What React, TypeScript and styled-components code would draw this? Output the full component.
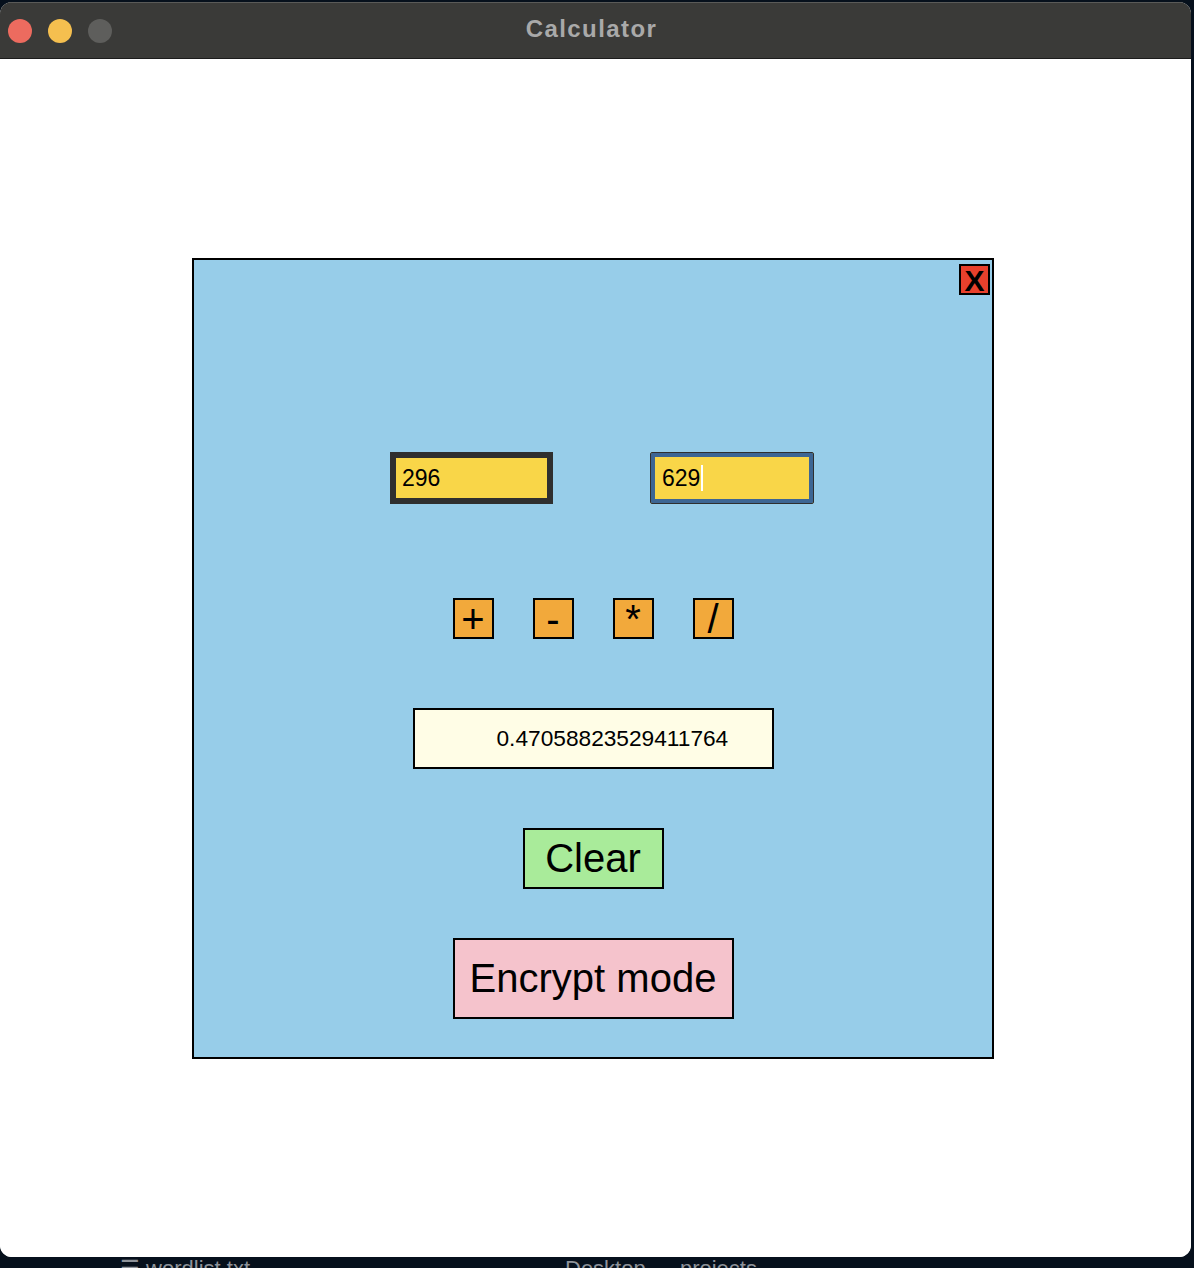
import React from "react";
import styled, { createGlobalStyle } from "styled-components";

const OPERATORS = ["+", "-", "*", "/"];

const GlobalStyle = createGlobalStyle`
  html, body {
    margin: 0;
    padding: 0;
    background: #06101c;
    font-family: "Liberation Sans", Arial, sans-serif;
  }
`;

export default function App() {
  return (
    <>
      <GlobalStyle />
      <Desktop>
        <Window>
          <TitleBar>
            <Lights>
              <Light $color="#ec6b5f" />
              <Light $color="#f5bf4f" />
              <Light $color="#5e5e5c" />
            </Lights>
            <Title>Calculator</Title>
          </TitleBar>
          <Content>
            <Panel>
              <CloseButton>X</CloseButton>
              <InputRow>
                <NumberField>296</NumberField>
                <NumberField $focused>
                  629
                  <Caret />
                </NumberField>
              </InputRow>
              <OperatorRow>
                {OPERATORS.map((op) => (
                  <OperatorButton key={op}>{op}</OperatorButton>
                ))}
              </OperatorRow>
              <ResultBox>0.47058823529411764</ResultBox>
              <ActionButton $bg="#a9eb9a" $w={141} $h={61} $mt={59}>
                Clear
              </ActionButton>
              <ActionButton $bg="#f5c3cc" $w={281} $h={81} $mt={49}>
                Encrypt mode
              </ActionButton>
            </Panel>
          </Content>
        </Window>
        <Dock>
          <DockItem $left={120}>☰ wordlist.txt</DockItem>
          <DockItem $left={565}>Desktop — projects</DockItem>
        </Dock>
      </Desktop>
    </>
  );
}

const Desktop = styled.div`
  width: 1194px;
  height: 1268px;
  overflow: hidden;
  padding-top: 2px;
  box-sizing: border-box;
  display: flex;
  flex-direction: column;
`;

const Window = styled.div`
  width: 1191px;
  height: 1255px;
  border-radius: 12px;
  overflow: hidden;
  display: flex;
  flex-direction: column;
  background: #ffffff;
  flex-shrink: 0;
`;

const TitleBar = styled.div`
  background: #3a3a38;
  border-top: 1px solid #5a5a58;
  border-bottom: 1px solid #1c1c1c;
  box-sizing: border-box;
  height: 57px;
  display: flex;
  align-items: center;
  position: relative;
`;

const Lights = styled.div`
  display: flex;
  gap: 16px;
  padding-left: 8px;
`;

const Light = styled.span<{ $color: string }>`
  width: 24px;
  height: 24px;
  border-radius: 50%;
  background: ${(p) => p.$color};
`;

const Title = styled.div`
  position: absolute;
  left: 0;
  right: 8px;
  top: 12px;
  text-align: center;
  color: #a9a9a9;
  font-weight: bold;
  font-size: 24px;
  line-height: 28px;
  letter-spacing: 1.4px;
`;

const Content = styled.div`
  flex: 1;
  background: #ffffff;
  padding-top: 199px;
  padding-left: 192px;
`;

const Panel = styled.div`
  position: relative;
  width: 802px;
  height: 801px;
  box-sizing: border-box;
  border: 2px solid #000;
  background: #97cde9;
  display: flex;
  flex-direction: column;
  align-items: center;
  padding-top: 192px;
`;

const CloseButton = styled.div`
  position: absolute;
  top: 4px;
  right: 2px;
  width: 31px;
  height: 31px;
  box-sizing: border-box;
  border: 2px solid #000;
  background: #e8402c;
  color: #000;
  font-weight: bold;
  font-size: 30px;
  line-height: 30px;
  text-align: center;
`;

const InputRow = styled.div`
  display: flex;
  gap: 97px;
  margin-left: 18px;
`;

const NumberField = styled.div<{ $focused?: boolean }>`
  width: ${(p) => (p.$focused ? 164 : 163)}px;
  height: 52px;
  box-sizing: border-box;
  background: #f9d648;
  display: flex;
  align-items: center;
  font-size: 23px;
  color: #000;
  border: ${(p) => (p.$focused ? "1px solid #2f2f2f" : "6px solid #2f2f2f")};
  padding-left: ${(p) => (p.$focused ? 11 : 6)}px;
  box-shadow: ${(p) => (p.$focused ? "inset 0 0 0 4px #3d6694" : "none")};
  border-radius: ${(p) => (p.$focused ? 2 : 0)}px;
`;

const Caret = styled.span`
  display: inline-block;
  width: 2px;
  height: 26px;
  background: #ffffff;
  margin-left: 1px;
`;

const OperatorRow = styled.div`
  display: flex;
  gap: 39px;
  margin-top: 94px;
`;

const OperatorButton = styled.div`
  width: 41px;
  height: 41px;
  box-sizing: border-box;
  border: 2px solid #000;
  background: #f2a93b;
  color: #000;
  font-size: 40px;
  line-height: 38px;
  text-align: center;
`;

const ResultBox = styled.div`
  width: 361px;
  height: 61px;
  box-sizing: border-box;
  margin-top: 69px;
  border: 2px solid #000;
  background: #fffde6;
  display: flex;
  align-items: center;
  padding-left: 82px;
  font-size: 22.7px;
  color: #000;
`;

const ActionButton = styled.div<{ $bg: string; $w: number; $h: number; $mt: number }>`
  width: ${(p) => p.$w}px;
  height: ${(p) => p.$h}px;
  margin-top: ${(p) => p.$mt}px;
  box-sizing: border-box;
  border: 2px solid #000;
  background: ${(p) => p.$bg};
  display: flex;
  align-items: center;
  justify-content: center;
  font-size: 40px;
  color: #000;
  white-space: nowrap;
`;

const Dock = styled.div`
  position: relative;
  flex: 1;
  overflow: hidden;
`;

const DockItem = styled.span<{ $left: number }>`
  position: absolute;
  top: 1px;
  left: ${(p) => p.$left}px;
  color: #8e939a;
  font-size: 22px;
  line-height: 22px;
  white-space: nowrap;
`;
